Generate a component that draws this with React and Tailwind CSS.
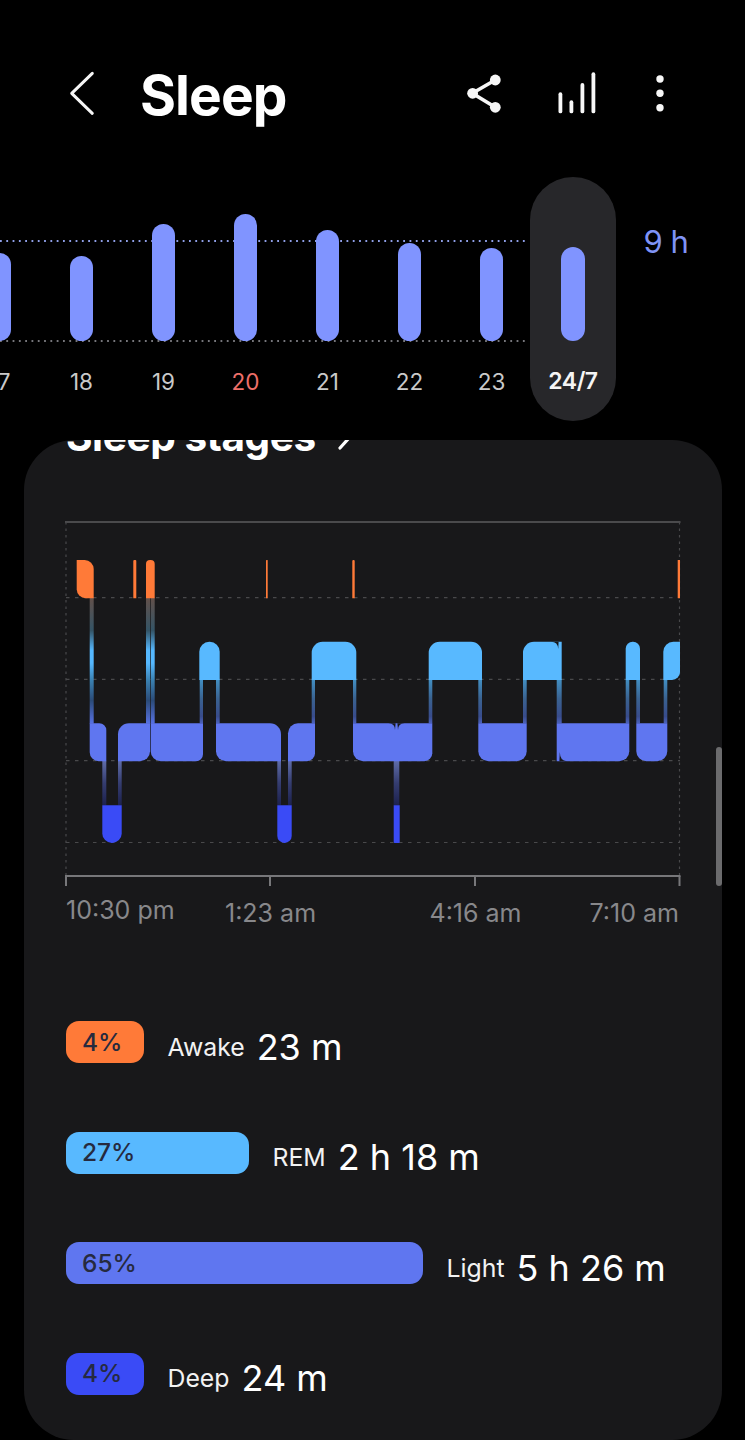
const rr = (x0, x1, y0, y1, tl, tr, br, bl) =>
  `M${x0 + tl} ${y0} L${x1 - tr} ${y0} A${tr} ${tr} 0 0 1 ${x1} ${y0 + tr} L${x1} ${y1 - br} A${br} ${br} 0 0 1 ${x1 - br} ${y1} L${x0 + bl} ${y1} A${bl} ${bl} 0 0 1 ${x0} ${y1 - bl} L${x0} ${y0 + tl} A${tl} ${tl} 0 0 1 ${x0 + tl} ${y0} Z`;

const AW = [560, 598.2];
const RM = [641.7, 679.9];
const LT = [723.3, 761.2];
const DP = [805.3, 842.9];

const awake = [
  [76.7, 93.7, 0, 9, 0, 9],
  [133.3, 136.3, 1, 1, 0, 0],
  [146, 154.7, 4, 4, 0, 0],
  [266, 267.7, 0.5, 0.5, 0, 0],
  [352.3, 354.7, 1, 1, 0, 0],
  [677.7, 680, 0, 0, 0, 0],
];
const rem = [
  [199.3, 219.7, 10, 10, 0, 0],
  [311.7, 356.3, 11, 11, 0, 0],
  [428.7, 482, 11, 11, 0, 0],
  [523, 561.7, 11, 0, 0, 0],
  [625.7, 640, 7, 7, 0, 0],
  [663.3, 680, 10, 0, 8, 0],
];
const light = [
  [89.7, 106.3, 0, 7, 0, 9],
  [118, 150, 11, 0, 10, 0],
  [150.7, 203, 0, 0, 7, 10],
  [216, 281, 0, 11, 0, 10],
  [288, 315, 10, 0, 8, 0],
  [353, 432.3, 0, 0, 8, 10],
  [478.3, 526.7, 0, 0, 10, 10],
  [556.7, 629.3, 0, 0, 10, 0],
  [636.3, 667.3, 0, 0, 10, 10],
];
const deep = [
  [102.3, 121.7, 0, 0, 9.5, 9.5],
  [277.3, 291.7, 0, 0, 7, 7],
  [393.7, 399.7, 0, 0, 1, 1],
];
const awakeLinks = [[89.7, 93.7], [146, 150], [150.7, 154.7]];
const remLinks = [
  [199.7, 203], [216, 219.7], [311.7, 315], [353, 356.3], [428.7, 432.3],
  [478.3, 482], [523, 526.7], [556.7, 561.7], [625.7, 629.3], [636.3, 640], [663.7, 667.3],
];
const deepLinks = [[102.3, 106.3], [118, 121.7], [277.3, 281], [288, 291.7], [393.7, 399.3]];
const BG = "#18181a";

function StageChart() {
  return (
    <svg className="block w-[698px] h-[386px]" viewBox="24 510 698 386">
      <defs>
        <linearGradient id="aw" gradientUnits="userSpaceOnUse" x1="0" y1="598" x2="0" y2="723">
          <stop offset="0" stopColor="#62504a" />
          <stop offset="0.26" stopColor="#345466" />
          <stop offset="0.42" stopColor="#55b8ff" />
          <stop offset="0.52" stopColor="#55b8ff" />
          <stop offset="0.66" stopColor="#3a80b0" />
          <stop offset="0.82" stopColor="#2b4b78" />
          <stop offset="1" stopColor="#5670e0" />
        </linearGradient>
        <linearGradient id="re" gradientUnits="userSpaceOnUse" x1="0" y1="679" x2="0" y2="723">
          <stop offset="0" stopColor="#4290c4" />
          <stop offset="0.45" stopColor="#3a6290" />
          <stop offset="0.85" stopColor="#384c8c" />
          <stop offset="1" stopColor="#4a60b8" />
        </linearGradient>
        <linearGradient id="de" gradientUnits="userSpaceOnUse" x1="0" y1="761" x2="0" y2="805">
          <stop offset="0" stopColor="#5f6ca8" />
          <stop offset="0.5" stopColor="#353d70" />
          <stop offset="1" stopColor="#1d2250" />
        </linearGradient>
      </defs>
      <line x1="65" y1="522" x2="680.5" y2="522" stroke="#4a4a4c" strokeWidth="2" />
      {[597.7, 679.3, 760.7, 842.5].map((y) => (
        <line key={y} x1="66" y1={y} x2="680" y2={y} stroke="#49494b" strokeWidth="1.2" strokeDasharray="3.5 5.5" />
      ))}
      <line x1="66" y1="522" x2="66" y2="876" stroke="#49494b" strokeWidth="1.2" strokeDasharray="2.5 4" />
      <line x1="679.5" y1="522" x2="679.5" y2="876" stroke="#49494b" strokeWidth="1.2" strokeDasharray="2.5 4" />
      {awakeLinks.map(([a, b]) => <rect key={a} x={a} y="597.7" width={b - a} height="126" fill="url(#aw)" />)}
      {remLinks.map(([a, b]) => <rect key={a} x={a} y="679.3" width={b - a} height="44" fill="url(#re)" />)}
      {deepLinks.map(([a, b]) => <rect key={a} x={a} y="760.7" width={b - a} height="44.6" fill="url(#de)" />)}
      {awake.map((s) => <path key={s[0]} d={rr(s[0], s[1], AW[0], AW[1], s[2], s[3], s[4], s[5])} fill="#ff7a38" />)}
      {rem.map((s) => <path key={s[0]} d={rr(s[0], s[1], RM[0], RM[1], s[2], s[3], s[4], s[5])} fill="#58b9ff" />)}
      {light.map((s) => <path key={s[0]} d={rr(s[0], s[1], LT[0], LT[1], s[2], s[3], s[4], s[5])} fill="#5f76f0" />)}
      {deep.map((s) => <path key={s[0]} d={rr(s[0], s[1], DP[0], DP[1], s[2], s[3], s[4], s[5])} fill="#3a4bf6" />)}
      <path d="M388.5 723.3 Q395 723.3 395 730 L395.6 723.3 Z" fill={BG} />
      <path d="M404.5 723.3 Q398 723.3 398 730 L397.4 723.3 Z" fill={BG} />
      <path d="M551 641.7 Q558 641.7 558.2 649 L558.6 641.7 Z" fill={BG} />
      <path d="M567 761.2 Q560 761.2 559.8 752 L559.4 761.2 Z" fill={BG} />
      <line x1="65" y1="876" x2="680.5" y2="876" stroke="#77777a" strokeWidth="2" />
      {[66, 270, 475, 679.5].map((x) => (
        <line key={x} x1={x} y1="876" x2={x} y2="886" stroke="#77777a" strokeWidth="2" />
      ))}
    </svg>
  );
}

const bars = [
  { label: "17", top: 253 },
  { label: "18", top: 256 },
  { label: "19", top: 224 },
  { label: "20", top: 214, red: true },
  { label: "21", top: 230 },
  { label: "22", top: 243 },
  { label: "23", top: 248 },
];

function Column({ label, top, red }) {
  return (
    <div className="w-[82px] h-[244px] shrink-0 flex flex-col items-center justify-end pb-[26px] relative z-10">
      <div className="w-[23.5px] rounded-full bg-[#8094ff]" style={{ height: 341 - top }} />
      <div className={`mt-[27px] text-[22.5px] leading-[27px] h-[27px] ${red ? "text-[#ee6f69]" : "text-[#c9c9c9]"}`}>{label}</div>
    </div>
  );
}

function Row({ pct, width, color, label, value }) {
  return (
    <div className="flex items-center h-[42px]">
      <div className={`h-[42px] rounded-[13px] flex items-center pl-[16.5px] text-[24.5px] font-medium text-[#262a3f] ${color}`} style={{ width }}>
        {pct}
      </div>
      <div className="ml-[23.5px] mt-[9px] text-[24.8px] leading-[42px] text-[#f2f2f2]">{label}</div>
      <div className="ml-[12px] mt-[9px] text-[36px] leading-[42px] text-white">{value}</div>
    </div>
  );
}

export default function App() {
  return (
    <div className="relative w-[745px] h-[1440px] overflow-hidden bg-black font-['Inter',sans-serif]">
      <header className="flex items-center h-[60px] mt-[63px]">
        <svg className="ml-[68px] w-[28px] h-[46px] shrink-0" viewBox="68 70 28 46" fill="none">
          <path d="M92.3 73.3 L71.7 93.3 L92.3 113.3" stroke="#f5f5f5" strokeWidth="3" strokeLinecap="round" strokeLinejoin="round" />
        </svg>
        <h1 className="ml-[44px] mt-[3px] text-[55px] leading-[60px] font-bold text-white tracking-[-0.9px]">Sleep</h1>
        <svg className="ml-auto mr-[70px] w-[210px] h-[60px] shrink-0" viewBox="465 63 210 60" fill="#f7f7f7">
          <path d="M495.3 80 L472.3 93.3 L495.3 107.3" fill="none" stroke="#f7f7f7" strokeWidth="3.6" />
          <circle cx="495.3" cy="80" r="5.4" />
          <circle cx="472.6" cy="93.3" r="5.4" />
          <circle cx="495.3" cy="107.3" r="5.4" />
          <rect x="558.5" y="92.3" width="3.8" height="21" rx="1.9" />
          <rect x="569.5" y="100.3" width="3.8" height="13" rx="1.9" />
          <rect x="580.5" y="83" width="3.8" height="30.3" rx="1.9" />
          <rect x="591.5" y="72.3" width="3.8" height="41" rx="1.9" />
          <circle cx="660" cy="79" r="3.7" />
          <circle cx="660" cy="93.3" r="3.7" />
          <circle cx="660" cy="107.7" r="3.7" />
        </svg>
      </header>

      <section className="relative flex h-[244px] mt-[54px] ml-[-41.5px]">
        {bars.map((b) => <Column key={b.label} {...b} />)}
        <div className="w-[86px] h-[244px] ml-[-2.5px] shrink-0 rounded-full bg-[#27272a] flex flex-col items-center justify-end pb-[26px] relative z-10">
          <div className="w-[23.5px] rounded-full bg-[#8094ff]" style={{ height: 341 - 247 }} />
          <div className="mt-[27px] text-[23px] leading-[27px] h-[27px] font-semibold text-[#f5f5f5] tracking-[-0.5px]">24/7</div>
        </div>
        <svg className="absolute left-[41.5px] top-[60px] w-[527px] h-[110px]" viewBox="0 237 527 110" fill="none">
          <line x1="0" y1="241" x2="526" y2="241" stroke="#8f9fe8" strokeWidth="1.8" strokeDasharray="1.8 4.5" />
          <line x1="0" y1="341" x2="526" y2="341" stroke="#77777c" strokeWidth="1.8" strokeDasharray="1.8 4.5" />
        </svg>
        <div className="ml-[27.5px] mt-[46px] text-[31px] leading-[38px] text-[#7f93f5] whitespace-nowrap tracking-[-0.5px]">9 h</div>
      </section>

      <main className="relative w-[698px] h-[1000px] ml-[24px] mt-[19px] rounded-[50px] bg-[#18181a] overflow-hidden">
        <div className="flex items-center pl-[42px] h-[50px] -mt-[28px] text-[40.5px] leading-[50px] font-bold text-white whitespace-nowrap tracking-[-0.4px]">
          Sleep stages
          <svg className="ml-[22px] w-[13px] h-[24px] mt-[2px] shrink-0" viewBox="0 0 13 24" fill="none">
            <path d="M2 2 L11 12 L2 22" stroke="#fff" strokeWidth="3.2" strokeLinecap="round" strokeLinejoin="round" />
          </svg>
        </div>
        <div className="mt-[48px]">
          <StageChart />
        </div>
        <div className="flex items-start pl-[42px] -mt-[2px] text-[25px] leading-[32px] text-[#88888b] whitespace-nowrap">
          <span className="w-[159px]">10:30 pm</span>
          <span className="w-[204.5px] mt-[3px]">1:23 am</span>
          <span className="w-[160px] mt-[3px]">4:16 am</span>
          <span className="mt-[3px]">7:10 am</span>
        </div>
        <div className="flex flex-col gap-[68.6px] pl-[41.5px] mt-[92px]">
          <Row pct="4%" width={78.5} color="bg-[#ff7a38]" label="Awake" value="23 m" />
          <Row pct="27%" width={183.5} color="bg-[#58b9ff]" label="REM" value="2 h 18 m" />
          <Row pct="65%" width={357.5} color="bg-[#5f76f0]" label="Light" value="5 h 26 m" />
          <Row pct="4%" width={78.5} color="bg-[#3a4bf6]" label="Deep" value="24 m" />
        </div>
      </main>

      <div className="absolute left-[716px] top-[747px] w-[6px] h-[139px] rounded-full bg-[#6b6b6d]" />
    </div>
  );
}
